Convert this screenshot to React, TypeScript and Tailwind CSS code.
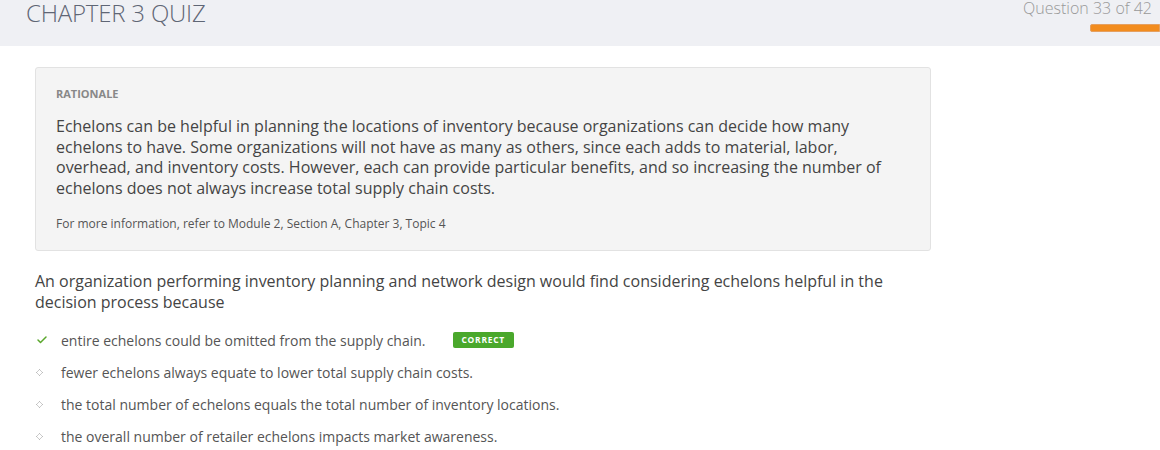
import { Check } from "lucide-react"

const options = [
  { text: "entire echelons could be omitted from the supply chain.", correct: true },
  { text: "fewer echelons always equate to lower total supply chain costs.", correct: false },
  { text: "the total number of echelons equals the total number of inventory locations.", correct: false },
  { text: "the overall number of retailer echelons impacts market awareness.", correct: false },
]

function Bullet() {
  return (
    <svg width="7" height="7" viewBox="0 0 7 7">
      <rect x="3" y="0" width="1" height="1" fill="#bbb" />
      <rect x="2" y="1" width="1" height="1" fill="#ccc" />
      <rect x="4" y="1" width="1" height="1" fill="#ccc" />
      <rect x="1" y="2" width="1" height="1" fill="#ccc" />
      <rect x="5" y="2" width="1" height="1" fill="#ccc" />
      <rect x="0" y="3" width="1" height="1" fill="#bbb" />
      <rect x="6" y="3" width="1" height="1" fill="#bbb" />
      <rect x="1" y="4" width="1" height="1" fill="#ccc" />
      <rect x="5" y="4" width="1" height="1" fill="#ccc" />
      <rect x="2" y="5" width="1" height="1" fill="#ccc" />
      <rect x="4" y="5" width="1" height="1" fill="#ccc" />
      <rect x="3" y="6" width="1" height="1" fill="#bbb" />
    </svg>
  )
}

export default function App() {
  return (
    <div className="w-[1160px] h-[450px] bg-white overflow-hidden font-['Open_Sans',sans-serif] text-[#444]">
      {/* Header */}
      <div className="h-[46px] bg-[#eff0f4] flex justify-between">
        <h1 className="pl-[26px] -mt-[3px] text-[24px] font-light text-[#5f6675] leading-[32px] tracking-[-0.2px]">
          CHAPTER 3 QUIZ
        </h1>
        <div className="flex flex-col items-end">
          <div className="pr-[8px] -mt-[3px] text-[16px] font-light text-[#999] leading-[22px]">
            Question 33 of 42
          </div>
          <div className="mt-[5px] w-[70px] h-[8px] bg-[#f28c1e] rounded-l-[2px] border border-[#e5a060]" />
        </div>
      </div>

      <div className="pl-[35px]">
        {/* Rationale */}
        <div className="mt-[21px] w-[896px] bg-[#f4f4f4] border border-[#e2e2e2] rounded-[3px] px-[20px] pt-[18px] pb-[18px]">
          <div className="text-[11px] font-bold text-[#888] leading-[16px]">RATIONALE</div>
          <p className="mt-[14px] text-[16px] leading-[20.5px] text-[#444] w-[840px]">
            Echelons can be helpful in planning the locations of inventory because organizations can decide how many
            echelons to have. Some organizations will not have as many as others, since each adds to material, labor,
            overhead, and inventory costs. However, each can provide particular benefits, and so increasing the number of
            echelons does not always increase total supply chain costs.
          </p>
          <p className="mt-[18px] text-[12px] leading-[16px] text-[#555]">
            For more information, refer to Module 2, Section A, Chapter 3, Topic 4
          </p>
        </div>

        {/* Question */}
        <p className="mt-[20px] w-[870px] text-[16px] leading-[20.5px] text-[#444]">
          An organization performing inventory planning and network design would find considering echelons helpful in the
          decision process because
        </p>

        <ul className="mt-[18px] flex flex-col gap-[12px]">
          {options.map((o) => (
            <li key={o.text} className="flex items-center h-[20px] text-[14px] text-[#555]">
              <span className="w-[26px] flex items-center pl-[1px]">
                {o.correct ? (
                  <Check className="w-[12px] h-[12px] text-[#5aa72c]" strokeWidth={3} />
                ) : (
                  <Bullet />
                )}
              </span>
              <span>{o.text}</span>
              {o.correct && (
                <span className="ml-[27px] h-[16px] px-[9px] bg-[#4aa82c] rounded-[2px] text-white text-[8.5px] font-bold tracking-[0.7px] leading-[16px]">
                  CORRECT
                </span>
              )}
            </li>
          ))}
        </ul>
      </div>
    </div>
  )
}
